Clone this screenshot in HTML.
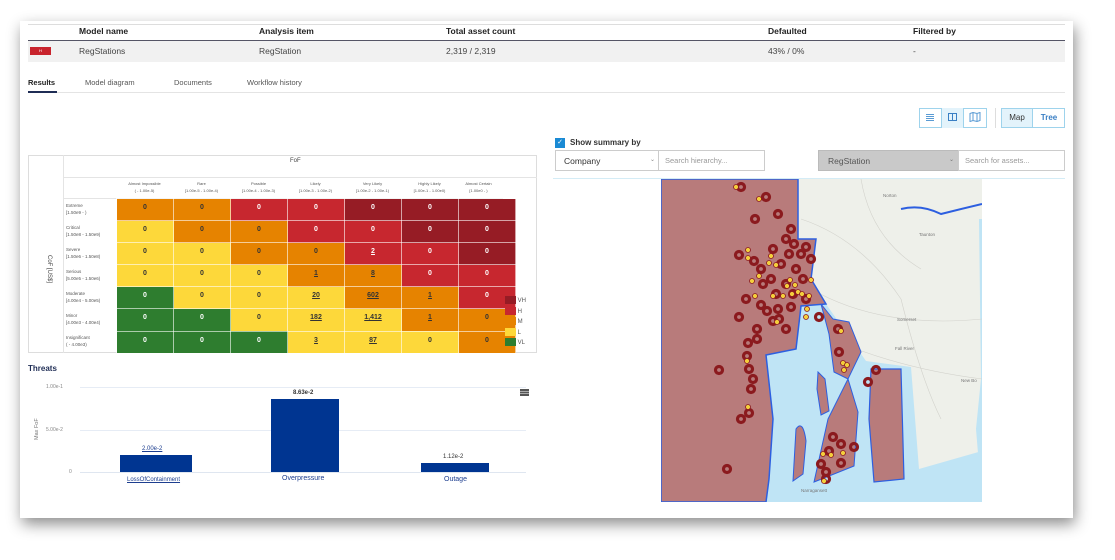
<!DOCTYPE html>
<html><head><meta charset="utf-8"><style>
*{margin:0;padding:0;box-sizing:border-box}
body{width:1115px;height:560px;background:#fff;font-family:"Liberation Sans",sans-serif;position:relative;overflow:hidden;color:#333}
.card{position:absolute;left:20px;top:21px;width:1053px;height:497px;background:#fff;box-shadow:2px 6px 14px rgba(0,0,0,.45)}
.a{position:absolute}
.hd{font-size:8.5px;font-weight:bold;color:#222}
.tx{font-size:8.5px;color:#444}
table.m{border-collapse:collapse;position:absolute;left:116px;top:198px}
table.m td{width:57px;height:22.1px;text-align:center;font-size:7px;font-weight:bold;border:1px solid rgba(255,255,255,.6);vertical-align:top;padding-top:5px}
.D{background:#961c25;color:#fff}.R{background:#c7272f;color:#fff}.O{background:#e68300;color:#333}.Y{background:#fdd83a;color:#333}.G{background:#2e7d2f;color:#fff}
u{text-decoration:underline}
.rl{position:absolute;left:66px;font-size:4.5px;color:#555;line-height:7px}
.cl{position:absolute;top:180px;width:57px;text-align:center;font-size:4px;color:#555;line-height:7px}
.btn{position:absolute;border:1px solid #9ed3ec;background:#fff}
</style></head><body>
<div class="card"></div>
<div class="a" style="left:28px;top:24px;width:1037px;height:1px;background:#ddd"></div>
<div class="a hd" style="left:79px;top:26px">Model name</div>
<div class="a hd" style="left:259px;top:26px">Analysis item</div>
<div class="a hd" style="left:446px;top:26px">Total asset count</div>
<div class="a hd" style="left:768px;top:26px">Defaulted</div>
<div class="a hd" style="left:913px;top:26px">Filtered by</div>
<div class="a" style="left:28px;top:40px;width:1037px;height:1px;background:#556"></div>
<div class="a" style="left:28px;top:41px;width:1037px;height:21px;background:#f1f1f1"></div>
<div class="a" style="left:30px;top:47px;width:21px;height:8px;background:#c8232c;color:#fff;font-size:4px;text-align:center;line-height:8px">H</div>
<div class="a tx" style="left:79px;top:46px">RegStations</div>
<div class="a tx" style="left:259px;top:46px">RegStation</div>
<div class="a tx" style="left:446px;top:46px">2,319 / 2,319</div>
<div class="a tx" style="left:768px;top:46px">43% / 0%</div>
<div class="a tx" style="left:913px;top:46px">-</div>
<div class="a" style="left:28px;top:92px;width:1037px;height:1px;background:#e4e4e4"></div>
<div class="a" style="left:28px;top:78px;font-size:7.5px;color:#222;font-weight:bold">Results</div>
<div class="a" style="left:28px;top:91px;width:29px;height:2px;background:#1f2d55"></div>
<div class="a" style="left:85px;top:78px;font-size:7.5px;color:#555">Model diagram</div>
<div class="a" style="left:174px;top:78px;font-size:7.5px;color:#555">Documents</div>
<div class="a" style="left:247px;top:78px;font-size:7.5px;color:#555">Workflow history</div>
<div class="a" style="left:28px;top:155px;width:509px;height:198px;border:1px solid #ddd"></div>
<div class="a" style="left:63px;top:155px;width:1px;height:198px;background:#e4e4e4"></div>
<div class="a" style="left:63px;top:177px;width:474px;height:1px;background:#e4e4e4"></div>
<div class="a" style="left:63px;top:198px;width:440px;height:1px;background:#e4e4e4"></div>
<div class="a" style="left:290px;top:158px;font-size:6px;color:#444">FoF</div>
<div class="a" style="top:255px;font-size:6px;color:#444;transform:rotate(90deg);transform-origin:left top;left:52px">CoF [US$]</div>
<div class="cl" style="left:116px">Almost Impossible<br>( - 1.00e-5)</div>
<div class="cl" style="left:173px">Rare<br>[1.00e-5 - 1.00e-4)</div>
<div class="cl" style="left:230px">Possible<br>[1.00e-4 - 1.00e-3)</div>
<div class="cl" style="left:287px">Likely<br>[1.00e-3 - 1.00e-2)</div>
<div class="cl" style="left:344px">Very Likely<br>[1.00e-2 - 1.00e-1)</div>
<div class="cl" style="left:401px">Highly Likely<br>[1.00e-1 - 1.00e0)</div>
<div class="cl" style="left:455px;width:47px">Almost Certain<br>[1.00e0 - )</div>
<div class="rl" style="top:202px">Extreme<br>[1.50e9 - )</div>
<div class="rl" style="top:224px">Critical<br>[1.50e8 - 1.50e9)</div>
<div class="rl" style="top:246px">Severe<br>[1.50e6 - 1.50e8)</div>
<div class="rl" style="top:268px">Serious<br>[5.00e5 - 1.50e6)</div>
<div class="rl" style="top:290px">Moderate<br>[4.00e4 - 5.00e5)</div>
<div class="rl" style="top:312px">Minor<br>[4.00e3 - 4.00e4)</div>
<div class="rl" style="top:334px">Insignificant<br>( - 4.00e3)</div>
<table class="m">
<tr><td class="O">0</td><td class="O">0</td><td class="R">0</td><td class="R">0</td><td class="D">0</td><td class="D">0</td><td class="D" style="width:47px">0</td></tr>
<tr><td class="Y">0</td><td class="O">0</td><td class="O">0</td><td class="R">0</td><td class="R">0</td><td class="D">0</td><td class="D">0</td></tr>
<tr><td class="Y">0</td><td class="Y">0</td><td class="O">0</td><td class="O">0</td><td class="R"><u>2</u></td><td class="R">0</td><td class="D">0</td></tr>
<tr><td class="Y">0</td><td class="Y">0</td><td class="Y">0</td><td class="O"><u>1</u></td><td class="O"><u>8</u></td><td class="R">0</td><td class="R">0</td></tr>
<tr><td class="G">0</td><td class="Y">0</td><td class="Y">0</td><td class="Y"><u>20</u></td><td class="O"><u>602</u></td><td class="O"><u>1</u></td><td class="R">0</td></tr>
<tr><td class="G">0</td><td class="G">0</td><td class="Y">0</td><td class="Y"><u>182</u></td><td class="Y"><u>1,412</u></td><td class="O"><u>1</u></td><td class="O">0</td></tr>
<tr><td class="G">0</td><td class="G">0</td><td class="G">0</td><td class="Y"><u>3</u></td><td class="Y"><u>87</u></td><td class="Y">0</td><td class="O">0</td></tr>
</table>
<div class="a" style="left:505px;top:296px;font-size:6px;color:#555;line-height:10.5px">
<div><span style="display:inline-block;width:11px;height:8px;background:#961c25;vertical-align:middle"></span> VH</div>
<div><span style="display:inline-block;width:11px;height:8px;background:#c7272f;vertical-align:middle"></span> H</div>
<div><span style="display:inline-block;width:11px;height:8px;background:#e68300;vertical-align:middle"></span> M</div>
<div><span style="display:inline-block;width:11px;height:8px;background:#fdd83a;vertical-align:middle"></span> L</div>
<div><span style="display:inline-block;width:11px;height:8px;background:#2e7d2f;vertical-align:middle"></span> VL</div>
</div>
<div class="a" style="left:28px;top:364px;font-size:8px;font-weight:bold;color:#1f2d55">Threats</div>
<div class="a" style="left:80px;top:387px;width:446px;height:1px;background:#e6ecf5"></div>
<div class="a" style="left:80px;top:430px;width:446px;height:1px;background:#e6ecf5"></div>
<div class="a" style="left:80px;top:472px;width:446px;height:1px;background:#dfe6f0"></div>
<div class="a" style="left:46px;top:384px;font-size:5px;color:#888">1.00e-1</div>
<div class="a" style="left:46px;top:427px;font-size:5px;color:#888">5.00e-2</div>
<div class="a" style="left:69px;top:469px;font-size:5px;color:#888">0</div>
<div class="a" style="left:34px;top:440px;font-size:5.5px;color:#777;transform:rotate(-90deg);transform-origin:left top">Max FoF</div>
<div class="a" style="left:520px;top:389px;width:9px;height:1.5px;background:#555;box-shadow:0 2.5px #555,0 5px #555"></div>
<div class="a" style="left:120px;top:455px;width:72px;height:17px;background:#003591"></div>
<div class="a" style="left:271px;top:399px;width:68px;height:73px;background:#003591"></div>
<div class="a" style="left:421px;top:463px;width:68px;height:9px;background:#003591"></div>
<div class="a" style="left:142px;top:446px;font-size:6px;color:#1d3e8f;text-decoration:underline">2.00e-2</div>
<div class="a" style="left:293px;top:390px;font-size:6px;color:#333;font-weight:bold">8.63e-2</div>
<div class="a" style="left:443px;top:454px;font-size:6px;color:#333">1.12e-2</div>
<div class="a" style="left:127px;top:477px;font-size:6px;color:#1d3e8f;text-decoration:underline">LossOfContainment</div>
<div class="a" style="left:282px;top:475px;font-size:7px;color:#1d3e8f">Overpressure</div>
<div class="a" style="left:444px;top:476px;font-size:7px;color:#1d3e8f">Outage</div>
<div class="btn" style="left:919px;top:108px;width:68px;height:20px;"></div>
<div class="a" style="left:941px;top:108px;width:23px;height:20px;background:#e3f3fb;border-left:1px solid #9ed3ec;border-right:1px solid #9ed3ec"></div>
<div class="a" style="left:926px;top:114px;width:8px;height:1px;background:#5a9bd4;box-shadow:0 2px #5a9bd4,0 4px #5a9bd4,0 6px #5a9bd4"></div>
<div class="a" style="left:948px;top:113px;width:9px;height:8px;border:1.2px solid #3a7fc4"></div>
<div class="a" style="left:952px;top:113px;width:1px;height:8px;background:#3a7fc4"></div>
<svg class="a" style="left:969px;top:112px" width="12" height="10" viewBox="0 0 12 10"><path d="M1 1.5 L4 0.5 L8 1.5 L11 0.5 L11 8.5 L8 9.5 L4 8.5 L1 9.5Z M4 0.5 V8.5 M8 1.5 V9.5" fill="none" stroke="#5a9bd4" stroke-width="1"/></svg>
<div class="a" style="left:995px;top:108px;width:1px;height:20px;background:#ddd"></div>
<div class="btn" style="left:1001px;top:108px;width:64px;height:20px"></div>
<div class="a" style="left:1002px;top:109px;width:31px;height:18px;background:#e3f3fb;border-right:1px solid #9ed3ec;font-size:8px;color:#333;text-align:center;line-height:18px">Map</div>
<div class="a" style="left:1034px;top:109px;width:30px;height:18px;font-size:8px;color:#3a7fc4;text-align:center;line-height:18px;font-weight:bold">Tree</div>
<div class="a" style="left:555px;top:138px;width:10px;height:10px;background:#1a8ad4;color:#fff;font-size:7px;text-align:center;line-height:10px">✓</div>
<div class="a" style="left:570px;top:138px;font-size:8px;color:#333;font-weight:bold">Show summary by</div>
<div class="a" style="left:555px;top:150px;width:104px;height:21px;border:1px solid #ccc;font-size:8.5px;color:#333;padding:5px 8px">Company<span style="position:absolute;right:3px;top:5px;font-size:6px;color:#888">⌄</span></div>
<div class="a" style="left:658px;top:150px;width:107px;height:21px;border:1px solid #ccc;font-size:7.5px;color:#999;padding:5px 6px">Search hierarchy...</div>
<div class="a" style="left:818px;top:150px;width:141px;height:21px;border:1px solid #bbb;background:#c9c9c9;font-size:8.5px;color:#555;padding:5px 9px">RegStation<span style="position:absolute;right:4px;top:5px;font-size:6px;color:#777">⌄</span></div>
<div class="a" style="left:958px;top:150px;width:107px;height:21px;border:1px solid #ccc;font-size:7.5px;color:#999;padding:5px 6px">Search for assets...</div>
<div class="a" style="left:553px;top:178px;width:512px;height:1px;background:#d4ecf6"></div>
<svg class="a" style="left:661px;top:179px" width="321" height="323" viewBox="0 0 321 323">
<rect width="321" height="323" fill="#eef0ea"/>
<path d="M318 40 L321 40 L321 323 L315 250 L320 200Z" fill="#bfe4f5"/>
<g stroke="#d2d2cc" stroke-width="0.6" fill="none"><path d="M140 40 Q200 60 240 120 Q260 200 280 240"/><path d="M150 110 Q220 150 321 140"/><path d="M170 160 Q240 190 321 200"/><path d="M200 0 Q210 60 260 90"/></g>
<path d="M135 125 L165 125 L205 182 L250 188 L258 290 L321 272 L321 323 L105 323 L112 240 L105 176 L135 170Z" fill="#bfe4f5"/>
<path d="M240 30 Q260 25 280 35 Q300 30 321 25" stroke="#2d5fe0" stroke-width="2" fill="none"/>
<g font-size="4.5" fill="#777" font-family="Liberation Sans"><text x="222" y="18">Norton</text><text x="258" y="57">Taunton</text><text x="236" y="142">Somerset</text><text x="234" y="171">Fall River</text><text x="300" y="203">New Bo</text><text x="140" y="313">Narragansett</text></g>
<path d="M0 0 L137 0 L137 60 L155 60 L150 100 L165 125 L140 127 L135 170 L105 176 L112 240 L108 300 L105 323 L0 323Z" fill="#b87b7b" stroke="#2d5fe0" stroke-width="1.5"/>
<path d="M160 125 L172 140 L188 143 L200 173 L187 200 L173 193 L168 155Z" fill="#b87b7b" stroke="#2d5fe0" stroke-width="1"/>
<path d="M157 193 L164 200 L168 232 L160 236 L156 210Z" fill="#b87b7b" stroke="#2d5fe0" stroke-width="1"/>
<path d="M187 200 L197 233 L193 287 L153 303 L167 240Z" fill="#b87b7b" stroke="#2d5fe0" stroke-width="1"/>
<path d="M210 190 L240 190 L243 300 L213 303 L208 240Z" fill="#b87b7b" stroke="#2d5fe0" stroke-width="1.2"/>
<path d="M135 250 Q142 240 145 262 L142 295 L132 302Z" fill="#b87b7b" stroke="#2d5fe0" stroke-width="1"/>
<g fill="none" stroke="#8b1a1e" stroke-width="3.2">
<circle cx="80" cy="8" r="3.5"/><circle cx="105" cy="18" r="3.5"/><circle cx="117" cy="35" r="3.5"/><circle cx="94" cy="40" r="3.5"/><circle cx="130" cy="50" r="3.5"/><circle cx="125" cy="60" r="3.5"/><circle cx="133" cy="65" r="3.5"/><circle cx="145" cy="68" r="3.5"/><circle cx="140" cy="75" r="3.5"/><circle cx="128" cy="75" r="3.5"/><circle cx="150" cy="80" r="3.5"/><circle cx="112" cy="70" r="3.5"/><circle cx="78" cy="76" r="3.5"/><circle cx="93" cy="82" r="3.5"/><circle cx="100" cy="90" r="3.5"/><circle cx="120" cy="85" r="3.5"/><circle cx="135" cy="90" r="3.5"/><circle cx="110" cy="100" r="3.5"/><circle cx="125" cy="105" r="3.5"/><circle cx="142" cy="100" r="3.5"/><circle cx="102" cy="105" r="3.5"/><circle cx="115" cy="115" r="3.5"/><circle cx="132" cy="115" r="3.5"/><circle cx="145" cy="120" r="3.5"/><circle cx="85" cy="120" r="3.5"/><circle cx="100" cy="126" r="3.5"/><circle cx="117" cy="130" r="3.5"/><circle cx="130" cy="128" r="3.5"/><circle cx="106" cy="132" r="3.5"/><circle cx="118" cy="140" r="3.5"/><circle cx="78" cy="138" r="3.5"/><circle cx="125" cy="150" r="3.5"/><circle cx="112" cy="142" r="3.5"/><circle cx="96" cy="150" r="3.5"/><circle cx="158" cy="138" r="3.5"/><circle cx="177" cy="150" r="3.5"/><circle cx="96" cy="160" r="3.5"/><circle cx="87" cy="164" r="3.5"/><circle cx="178" cy="173" r="3.5"/><circle cx="86" cy="177" r="3.5"/><circle cx="88" cy="190" r="3.5"/><circle cx="58" cy="191" r="3.5"/><circle cx="92" cy="200" r="3.5"/><circle cx="90" cy="210" r="3.5"/><circle cx="88" cy="234" r="3.5"/><circle cx="80" cy="240" r="3.5"/><circle cx="66" cy="290" r="3.5"/><circle cx="215" cy="191" r="3.5"/><circle cx="207" cy="203" r="3.5"/><circle cx="172" cy="258" r="3.5"/><circle cx="180" cy="265" r="3.5"/><circle cx="193" cy="268" r="3.5"/><circle cx="168" cy="272" r="3.5"/><circle cx="180" cy="284" r="3.5"/><circle cx="165" cy="293" r="3.5"/><circle cx="165" cy="300" r="3.5"/><circle cx="160" cy="285" r="3.5"/>
</g>
<g fill="#f4cf3c" stroke="#8b1a1e" stroke-width="0.8">
<circle cx="75" cy="8" r="2.5"/><circle cx="98" cy="20" r="2.5"/><circle cx="87" cy="71" r="2.5"/><circle cx="87" cy="79" r="2.5"/><circle cx="110" cy="77" r="2.5"/><circle cx="108" cy="84" r="2.5"/><circle cx="115" cy="86" r="2.5"/><circle cx="91" cy="102" r="2.5"/><circle cx="98" cy="97" r="2.5"/><circle cx="129" cy="101" r="2.5"/><circle cx="126" cy="107" r="2.5"/><circle cx="134" cy="106" r="2.5"/><circle cx="150" cy="101" r="2.5"/><circle cx="94" cy="117" r="2.5"/><circle cx="112" cy="117" r="2.5"/><circle cx="122" cy="117" r="2.5"/><circle cx="131" cy="115" r="2.5"/><circle cx="137" cy="113" r="2.5"/><circle cx="141" cy="115" r="2.5"/><circle cx="148" cy="117" r="2.5"/><circle cx="146" cy="130" r="2.5"/><circle cx="145" cy="138" r="2.5"/><circle cx="116" cy="143" r="2.5"/><circle cx="180" cy="152" r="2.5"/><circle cx="86" cy="182" r="2.5"/><circle cx="182" cy="184" r="2.5"/><circle cx="186" cy="186" r="2.5"/><circle cx="183" cy="191" r="2.5"/><circle cx="87" cy="228" r="2.5"/><circle cx="162" cy="275" r="2.5"/><circle cx="170" cy="276" r="2.5"/><circle cx="182" cy="274" r="2.5"/><circle cx="163" cy="302" r="2.5"/>
</g>
</svg>
</body></html>
